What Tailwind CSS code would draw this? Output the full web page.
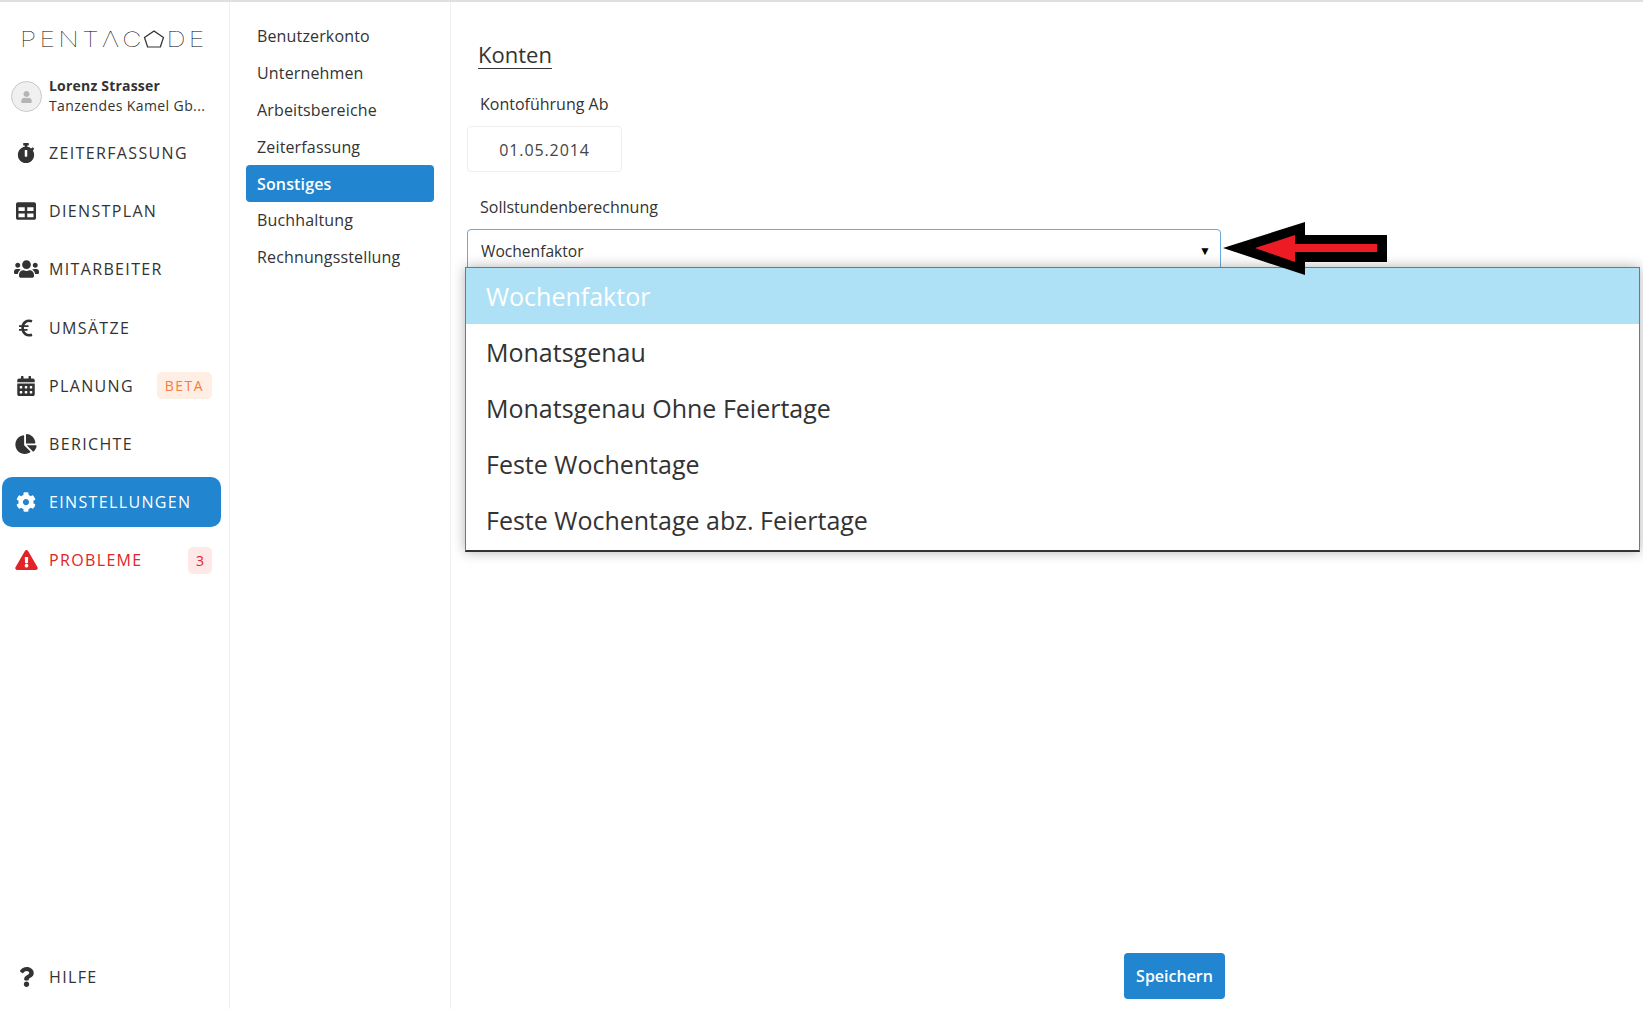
<!DOCTYPE html>
<html lang="de">
<head>
    <meta charset="UTF-8">
    <title>Einstellungen</title>
    <script src="https://cdn.jsdelivr.net/npm/@tailwindcss/browser@4"></script>
</head>
<body class="font-['Open_Sans',sans-serif] text-[#333] bg-white overflow-hidden">
<div class="flex h-[1009px] border-t-2 border-[#e0e0e0]">

    <!-- Main sidebar -->
    <aside class="w-[230px] shrink-0 border-r border-[#f0f0f0] flex flex-col pb-[7px]">
        <div class="h-[72px] flex items-center pl-[20px]">
            <div class="flex items-center origin-left scale-x-[1.27] font-['Inter',sans-serif] font-thin text-[21px] leading-none tracking-[2.6px] text-black pt-[2px]">
                <span>PENTΛC</span>
                <svg class="w-[17px] h-[18px] -ml-[1px] mr-[1px]" viewBox="0 0 17 18" fill="none" stroke="#333" stroke-width="1"><path d="M8.5 1 L16 7.5 L13.5 17 L3.5 17 L1 7.5 Z"/></svg>
                <span>DE</span>
            </div>
        </div>
        <div class="h-[54px] flex items-start pl-[11px]">
            <div class="w-[31px] h-[31px] mt-[7px] rounded-full bg-[#f0f0f0] border border-[#c8c8c8] flex items-center justify-center shrink-0">
                <svg class="w-[11px] h-[12px]" viewBox="0 0 448 512" fill="#b5b5b5"><path d="M224 256c70.7 0 128-57.3 128-128S294.7 0 224 0 96 57.3 96 128s57.3 128 128 128zm89.6 32h-16.7c-22.2 10.2-46.9 16-72.9 16s-50.6-5.8-72.9-16h-16.7C60.2 288 0 348.2 0 422.4V464c0 26.5 21.5 48 48 48h352c26.5 0 48-21.5 48-48v-41.6c0-74.2-60.2-134.4-134.4-134.4z"/></svg>
            </div>
            <div class="ml-[7px] text-[14px] leading-[20px] pt-[2px]">
                <div class="font-bold tracking-[0.2px]">Lorenz Strasser</div>
                <div class="w-[165px] tracking-[0.4px] whitespace-nowrap">Tanzendes Kamel Gb...</div>
            </div>
        </div>

        <nav class="flex flex-col gap-[8.2px] ml-[2px] w-[219px]">
            <a class="h-[50px] flex items-center rounded-[10px] text-[16px] tracking-[1.35px]">
                <span class="w-[47px] flex justify-center pl-[1px]">
                    <svg class="h-[20px] w-[18px]" viewBox="0 0 448 512" fill="#333"><path d="M432 304c0 114.9-93.1 208-208 208S16 418.9 16 304c0-104 76.3-190.2 176-205.5V64h-28c-6.6 0-12-5.4-12-12V12c0-6.6 5.4-12 12-12h120c6.6 0 12 5.4 12 12v40c0 6.6-5.4 12-12 12h-28v34.5c37.5 5.8 71.7 21.6 99.7 44.6l27.5-27.5c4.7-4.7 12.3-4.7 17 0l28.3 28.3c4.7 4.7 4.7 12.3 0 17l-29.4 29.4-.6.6C419.7 223.3 432 262.2 432 304zm-176 36V188.5c0-6.6-5.4-12-12-12h-40c-6.6 0-12 5.4-12 12V340c0 6.6 5.4 12 12 12h40c6.6 0 12-5.4 12-12z"/></svg>
                </span>
                ZEITERFASSUNG
            </a>
            <a class="h-[50px] flex items-center rounded-[10px] text-[16px] tracking-[1.35px]">
                <span class="w-[47px] flex justify-center pl-[1px]">
                    <svg class="h-[20px] w-[20px]" viewBox="0 0 512 512" fill="#333"><path d="M464 32H48C21.49 32 0 53.49 0 80v352c0 26.51 21.49 48 48 48h416c26.51 0 48-21.49 48-48V80c0-26.51-21.49-48-48-48zM224 416H64v-96h160v96zm0-160H64v-96h160v96zm224 160H288v-96h160v96zm0-160H288v-96h160v96z"/></svg>
                </span>
                DIENSTPLAN
            </a>
            <a class="h-[50px] flex items-center rounded-[10px] text-[16px] tracking-[1.35px]">
                <span class="w-[47px] flex justify-center pl-[1px]">
                    <svg class="h-[20px] w-[25px]" viewBox="0 0 640 512" fill="#333"><path d="M96 224c35.3 0 64-28.7 64-64s-28.7-64-64-64-64 28.7-64 64 28.7 64 64 64zm448 0c35.3 0 64-28.7 64-64s-28.7-64-64-64-64 28.7-64 64 28.7 64 64 64zm32 32h-64c-17.6 0-33.5 7.1-45.1 18.6 40.3 22.1 68.9 62 75.1 109.4h66c17.7 0 32-14.3 32-32v-32c0-35.3-28.7-64-64-64zm-256 0c61.9 0 112-50.1 112-112S381.9 32 320 32 208 82.1 208 144s50.1 112 112 112zm76.8 32h-8.3c-20.8 10-43.9 16-68.5 16s-47.6-6-68.5-16h-8.3C179.6 288 128 339.6 128 403.2V432c0 26.5 21.5 48 48 48h288c26.5 0 48-21.5 48-48v-28.8c0-63.6-51.6-115.2-115.2-115.2zm-223.7-13.4C161.5 263.1 145.6 256 128 256H64c-35.3 0-64 28.7-64 64v32c0 17.7 14.3 32 32 32h65.9c6.3-47.4 34.9-87.3 75.2-109.4z"/></svg>
                </span>
                MITARBEITER
            </a>
            <a class="h-[50px] flex items-center rounded-[10px] text-[16px] tracking-[1.35px]">
                <span class="w-[47px] flex justify-center pl-[1px]">
                    <svg class="h-[18px] w-[14px]" viewBox="0 0 14 18" fill="none" stroke="#333"><path d="M13 2.3 C 8 0.5 3.6 3.5 3.6 9 C 3.6 14.5 8 17.5 13 15.7" stroke-width="2.6"/><path d="M0 7.2 H9.5 M0 10.8 H8.5" stroke-width="1.8"/></svg>
                </span>
                UMSÄTZE
            </a>
            <a class="h-[50px] flex items-center rounded-[10px] text-[16px] tracking-[1.35px]">
                <span class="w-[47px] flex justify-center pl-[1px]">
                    <svg class="h-[20px] w-[18px]" viewBox="0 0 448 512" fill="#333"><path d="M0 464c0 26.5 21.5 48 48 48h352c26.5 0 48-21.5 48-48V192H0v272zm320-196c0-6.6 5.4-12 12-12h40c6.6 0 12 5.4 12 12v40c0 6.6-5.4 12-12 12h-40c-6.6 0-12-5.4-12-12v-40zm0 128c0-6.6 5.4-12 12-12h40c6.6 0 12 5.4 12 12v40c0 6.6-5.4 12-12 12h-40c-6.6 0-12-5.4-12-12v-40zM192 268c0-6.6 5.4-12 12-12h40c6.6 0 12 5.4 12 12v40c0 6.6-5.4 12-12 12h-40c-6.6 0-12-5.4-12-12v-40zm0 128c0-6.6 5.4-12 12-12h40c6.6 0 12 5.4 12 12v40c0 6.6-5.4 12-12 12h-40c-6.6 0-12-5.4-12-12v-40zM64 268c0-6.6 5.4-12 12-12h40c6.6 0 12 5.4 12 12v40c0 6.6-5.4 12-12 12H76c-6.6 0-12-5.4-12-12v-40zm0 128c0-6.6 5.4-12 12-12h40c6.6 0 12 5.4 12 12v40c0 6.6-5.4 12-12 12H76c-6.6 0-12-5.4-12-12v-40zM400 64h-48V16c0-8.8-7.2-16-16-16h-32c-8.8 0-16 7.2-16 16v48H160V16c0-8.8-7.2-16-16-16h-32c-8.8 0-16 7.2-16 16v48H48C21.5 64 0 85.5 0 112v48h448v-48c0-26.5-21.5-48-48-48z"/></svg>
                </span>
                PLANUNG
                <span class="ml-auto mr-[9px] h-[27px] w-[55px] flex items-center justify-center rounded-[5px] bg-[#ffeee3] text-[#f97b3d] text-[14px] tracking-[1.5px]">BETA</span>
            </a>
            <a class="h-[50px] flex items-center rounded-[10px] text-[16px] tracking-[1.35px]">
                <span class="w-[47px] flex justify-center pl-[1px]">
                    <svg class="h-[20px] w-[22px]" viewBox="0 0 544 512" fill="#333"><path d="M527.79 288H290.5l158.03 158.03c6.04 6.04 15.98 6.53 22.19.68 38.7-36.46 65.32-85.61 73.13-140.86 1.34-9.46-6.51-17.85-16.06-17.85zm-15.83-64.8C503.72 103.74 408.26 8.28 288.8.04 279.68-.59 272 7.1 272 16.24V240h223.77c9.14 0 16.82-7.68 16.19-16.8zM224 288V50.71c0-9.55-8.39-17.4-17.84-16.06C86.99 51.49-4.1 155.6.14 280.37 4.5 408.51 114.83 513.59 243.03 511.98c50.4-.63 96.97-16.87 135.26-44.03 7.9-5.6 8.42-17.23 1.57-24.08L224 288z"/></svg>
                </span>
                BERICHTE
            </a>
            <a class="h-[50px] flex items-center rounded-[10px] text-[16px] tracking-[1.35px] bg-[#2185d0] text-white font-medium">
                <span class="w-[47px] flex justify-center pl-[1px]">
                    <svg class="h-[20px] w-[20px]" viewBox="0 0 512 512" fill="#fff"><path d="M487.4 315.7l-42.6-24.6c4.3-23.2 4.3-47 0-70.2l42.6-24.6c4.9-2.8 7.1-8.6 5.5-14-11.1-35.6-30-67.8-54.7-94.6-3.8-4.1-10-5.1-14.8-2.3L380.8 110c-17.9-15.4-38.5-27.3-60.8-35.1V25.8c0-5.6-3.9-10.5-9.4-11.7-36.7-8.2-74.3-7.8-109.2 0-5.5 1.2-9.4 6.1-9.4 11.7V75c-22.2 7.9-42.8 19.8-60.8 35.1L88.7 85.5c-4.9-2.8-11-1.9-14.8 2.3-24.7 26.7-43.6 58.9-54.7 94.6-1.7 5.4.6 11.2 5.5 14L67.3 221c-4.3 23.2-4.3 47 0 70.2l-42.6 24.6c-4.9 2.8-7.1 8.6-5.5 14 11.1 35.6 30 67.8 54.7 94.6 3.8 4.1 10 5.1 14.8 2.3l42.6-24.6c17.9 15.4 38.5 27.3 60.8 35.1v49.2c0 5.6 3.9 10.5 9.4 11.7 36.7 8.2 74.3 7.8 109.2 0 5.5-1.2 9.4-6.1 9.4-11.7v-49.2c22.2-7.9 42.8-19.8 60.8-35.1l42.6 24.6c4.9 2.8 11 1.9 14.8-2.3 24.7-26.7 43.6-58.9 54.7-94.6 1.5-5.5-.7-11.3-5.6-14.1zM256 336c-44.1 0-80-35.9-80-80s35.9-80 80-80 80 35.9 80 80-35.9 80-80 80z"/></svg>
                </span>
                EINSTELLUNGEN
            </a>
            <a class="h-[50px] flex items-center rounded-[10px] text-[16px] tracking-[1.35px] text-[#e02427]">
                <span class="w-[47px] flex justify-center pl-[1px]">
                    <svg class="h-[20px] w-[23px]" viewBox="0 0 576 512" fill="#e02427"><path d="M569.517 440.013C587.975 472.007 564.806 512 527.94 512H48.054c-36.937 0-59.999-40.055-41.577-71.987L246.423 23.985c18.467-32.009 64.72-31.951 83.154 0l239.94 416.028zM288 354c-25.405 0-46 20.595-46 46s20.595 46 46 46 46-20.595 46-46-20.595-46-46-46zm-43.673-165.346l7.418 136c.347 6.364 5.609 11.346 11.982 11.346h48.546c6.373 0 11.635-4.982 11.982-11.346l7.418-136c.375-6.874-5.098-12.654-11.982-12.654h-63.383c-6.884 0-12.356 5.78-11.981 12.654z"/></svg>
                </span>
                PROBLEME
                <span class="ml-auto mr-[9px] h-[27px] w-[24px] flex items-center justify-center rounded-[5px] bg-[#ffe8e8] text-[14px] tracking-normal">3</span>
            </a>
        </nav>

        <a class="mt-auto ml-[2px] w-[219px] h-[50px] flex items-center text-[16px] tracking-[1.35px]">
            <span class="w-[47px] flex justify-center pl-[1px]">
                <svg class="h-[20px] w-[15px]" viewBox="0 0 384 512" fill="#333"><path d="M202.021 0C122.202 0 70.503 32.703 29.914 91.026c-7.363 10.58-5.093 25.086 5.178 32.874l43.138 32.709c10.373 7.865 25.132 6.026 33.253-4.148 25.049-31.381 43.63-49.449 82.757-49.449 30.764 0 68.816 19.799 68.816 49.631 0 22.552-18.617 34.134-48.993 51.164-35.423 19.86-82.299 44.576-82.299 106.405V320c0 13.255 10.745 24 24 24h72.471c13.255 0 24-10.745 24-24v-5.773c0-42.86 125.268-44.645 125.268-160.627C377.504 66.256 286.902 0 202.021 0zM192 373.459c-38.196 0-69.271 31.075-69.271 69.271 0 38.195 31.075 69.27 69.271 69.27s69.271-31.075 69.271-69.271-31.075-69.27-69.271-69.27z"/></svg>
            </span>
            HILFE
        </a>
    </aside>

    <!-- Settings sub navigation -->
    <nav class="w-[221px] shrink-0 border-r border-[#f0f0f0] px-[16px] pt-[16px] text-[16px] font-medium tracking-[0.15px]">
        <a class="h-[36.8px] flex items-center px-[11px]">Benutzerkonto</a>
        <a class="h-[36.8px] flex items-center px-[11px]">Unternehmen</a>
        <a class="h-[36.8px] flex items-center px-[11px]">Arbeitsbereiche</a>
        <a class="h-[36.8px] flex items-center px-[11px]">Zeiterfassung</a>
        <a class="h-[36.8px] flex items-center px-[11px] rounded-[4px] bg-[#2185d0] text-white font-semibold">Sonstiges</a>
        <a class="h-[36.8px] flex items-center px-[11px]">Buchhaltung</a>
        <a class="h-[36.8px] flex items-center px-[11px]">Rechnungsstellung</a>
    </nav>

    <!-- Content -->
    <main class="flex-1 flex flex-col pl-[16px] pb-[10px] relative">
        <h2 class="ml-[11px] mt-[37px] text-[22px] leading-[30px] underline underline-offset-[5px] decoration-1 font-normal">Konten</h2>
        <label class="ml-[13px] mt-[23px] text-[16px] leading-[24px] font-medium">Kontoführung Ab</label>
        <div class="mt-[10px] w-[155px] h-[46px] border border-[#eeeeee] rounded-[4px] flex items-center justify-center pt-[1px] text-[16px] tracking-[0.9px] text-[#444]">01.05.2014</div>
        <label class="ml-[13px] mt-[23px] text-[16px] leading-[24px] font-medium">Sollstundenberechnung</label>
        <div class="mt-[10px] w-[754px] h-[60px] border border-[#6aa9dc] rounded-[4px] pl-[13px] pr-[9px] pt-[9px] flex justify-between text-[15.6px] leading-[24px]">
            <span>Wochenfaktor</span>
            <span class="text-[12px] text-black">▼</span>
        </div>

        <button class="mt-auto ml-[657px] w-[101px] h-[46px] rounded-[4px] bg-[#2185d0] text-white text-[16px] font-semibold">Speichern</button>

        <!-- Opened dropdown over the form -->
        <ul class="absolute left-[14px] top-[265px] w-[1175px] bg-white border border-[#777] border-b-2 border-b-[#333] pb-[2px] shadow-[0_0_12px_rgba(0,0,0,0.3)] text-[25px] text-[#333]">
            <li class="h-[56px] flex items-center pl-[20px] pt-[2px] bg-[#aee1f6] text-white">Wochenfaktor</li>
            <li class="h-[56px] flex items-center pl-[20px] pt-[2px]">Monatsgenau</li>
            <li class="h-[56px] flex items-center pl-[20px] pt-[2px]">Monatsgenau Ohne Feiertage</li>
            <li class="h-[56px] flex items-center pl-[20px] pt-[2px]">Feste Wochentage</li>
            <li class="h-[56px] flex items-center pl-[20px] pt-[2px]">Feste Wochentage abz. Feiertage</li>
        </ul>

        <!-- Annotation arrow -->
        <svg class="absolute left-[772px] top-[220px] w-[164px] h-[53px]" viewBox="0 0 164 53">
            <path d="M0 26 L82 0 V13 H164 V40 H82 V53 Z" fill="#000"/>
            <path d="M32 26 L72 13 V22 H154 V30 H72 V40 Z" fill="#ed1c24"/>
        </svg>
    </main>
</div>
</body>
</html>
